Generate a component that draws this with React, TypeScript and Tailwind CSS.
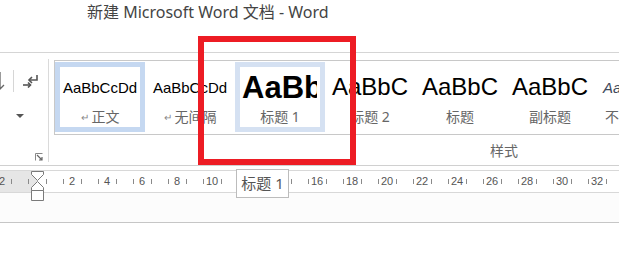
const CJK = '"Noto Sans", "Noto Sans CJK SC", sans-serif';

type Style = {
  sample: string;
  sampleClass: string;
  caption: string;
  mark?: boolean;
  frame?: string;
  left?: boolean;
};

const styles: Style[] = [
  { sample: 'AaBbCcDd', sampleClass: 'text-[15px] text-black', caption: '正文', mark: true, frame: 'border-[#c5d8f1]' },
  { sample: 'AaBbCcDd', sampleClass: 'text-[15px] text-black', caption: '无间隔', mark: true },
  { sample: 'AaBb', sampleClass: 'text-[31px] font-bold text-black', caption: '标题 1', frame: 'border-[#d5e1f2]', left: true },
  { sample: 'AaBbC', sampleClass: 'text-[24px] text-black', caption: '标题 2' },
  { sample: 'AaBbC', sampleClass: 'text-[24px] text-black', caption: '标题' },
  { sample: 'AaBbC', sampleClass: 'text-[24px] text-black', caption: '副标题' },
  { sample: 'AaBbCcDd', sampleClass: 'text-[15px] italic text-[#3f4a5c]', caption: '不明显强调' },
];

// ruler: origin at x=37, one character = 17.5px, labels every 2 (12 and 14 sit under the tooltip)
const ORIGIN = 37;
const UNIT = 17.5;
const labels = [-2, 2, 4, 6, 8, 10, 16, 18, 20, 22, 24, 26, 28, 30, 32];
const ticks = Array.from({ length: 36 }, (_, i) => i - 3).filter((k) => k < 11 || k > 13);

function StyleItem({ s }: { s: Style }) {
  return (
    <div className={`flex h-[70px] w-[90px] shrink-0 flex-col border-[5px] bg-white ${s.frame ?? 'border-transparent'}`}>
      <div className={`flex h-[40px] items-center overflow-hidden ${s.left ? 'justify-start pl-[2px] w-[77px]' : 'justify-center'}`}>
        <span className={`whitespace-nowrap leading-none ${s.sampleClass}`} style={{ fontFamily: '"Liberation Sans", sans-serif' }}>
          {s.sample}
        </span>
      </div>
      <div className="flex h-[20px] items-center justify-center gap-[3px] whitespace-nowrap text-[14px] leading-none text-[#666]" style={{ fontFamily: CJK }}>
        {s.mark && <span className="text-[10px] text-[#888]">↵</span>}
        {s.caption}
      </div>
    </div>
  );
}

export default function App() {
  return (
    <div className="relative h-[255px] w-[619px] overflow-hidden bg-white">
      {/* title bar */}
      <div className="h-[53px] border-b border-[#d5d5d5] pl-[87px]">
        <span className="text-[16px] leading-[20px] text-[#444]" style={{ fontFamily: CJK }}>
          新建 Microsoft Word 文档 - Word
        </span>
      </div>

      {/* ribbon */}
      <div className="flex h-[113px] border-b border-[#d0d0d0]">
        <div className="w-[49px] shrink-0 pb-[3px] pt-[6px]">
          <div className="flex h-full flex-col border-r border-[#dadada]">
            <div className="mt-[11px] flex h-[22px] items-center">
              <div className="w-[5px] overflow-hidden">
                <svg width="10" height="20" viewBox="0 0 10 20" className="-ml-[5px]">
                  <path d="M5 1v17M1 14l4 4 4-4" fill="none" stroke="#666" strokeWidth="1.3" />
                </svg>
              </div>
              <div className="ml-[8px] h-[22px] w-px bg-[#d6d6d6]" />
              <svg width="17" height="14" viewBox="0 0 17 14" className="ml-[8px]">
                <path d="M15 1v5H8" fill="none" stroke="#555" strokeWidth="1.6" />
                <path d="M10 3 7 6l3 3" fill="none" stroke="#555" strokeWidth="1.6" />
                <path d="M1 11h7" fill="none" stroke="#555" strokeWidth="1.6" />
                <path d="M6 8.5 8.5 11 6 13.5" fill="none" stroke="#555" strokeWidth="1.6" />
              </svg>
            </div>
            <svg width="10" height="5" viewBox="0 0 10 5" className="ml-[15px] mt-[22px]">
              <path d="M1 0h8L5 4z" fill="#555" />
            </svg>
            <svg width="8" height="8" viewBox="0 0 8 8" className="mb-[1px] ml-[35px] mt-auto">
              <path d="M0.5 7.5V0.5h7" fill="none" stroke="#888" strokeWidth="1" />
              <path d="M2 2l5 5M7 4v3H4" fill="none" stroke="#666" strokeWidth="1.2" />
            </svg>
          </div>
        </div>

        <div className="flex min-w-0 flex-1 flex-col">
          <div className="ml-[5px] mt-[7px] flex h-[75px] overflow-hidden border-b border-l border-t border-[#c8c8c8] pb-[2px] pt-px">
            {styles.map((s) => (
              <StyleItem key={s.caption} s={s} />
            ))}
          </div>
          <div className="flex flex-1 items-center pl-[441px] text-[14px] text-[#666]" style={{ fontFamily: CJK }}>
            样式
          </div>
        </div>
      </div>

      {/* ruler */}
      <div className="mt-[4px] h-[23px] border-b border-t border-[#d8d8d8]">
        <div className="relative h-full">
          <div className="absolute inset-y-0 left-0 w-[37px] bg-[#e6e6e6]" />
          {ticks.map((k) => (
            <div
              key={k}
              className="absolute top-[8px] h-[5px] w-px bg-[#8a8a8a]"
              style={{ left: Math.round(ORIGIN + UNIT / 2 + k * UNIT) }}
            />
          ))}
          {labels.map((n) => (
            <span
              key={n}
              className="absolute top-[4px] w-[20px] -translate-x-1/2 text-center text-[11px] leading-[13px] text-[#555]"
              style={{ left: ORIGIN + n * UNIT, fontFamily: '"Liberation Sans", sans-serif' }}
            >
              {Math.abs(n)}
            </span>
          ))}
        </div>
      </div>

      {/* document area */}
      <div className="h-[30px] border-b border-[#c6c6c6] bg-[#fcfcfc]" />

      {/* indent markers */}
      <svg width="13" height="31" viewBox="0 0 13 31" className="absolute left-[31px] top-[171px]">
        <path d="M0.5 0.5h12v3L6.5 9.5 0.5 3.5z" fill="#fff" stroke="#7a7a7a" />
        <path d="M6.5 10.5l6 6v3h-12v-3z" fill="#fff" stroke="#7a7a7a" />
        <path d="M0.5 19.5h12v10h-12z" fill="#fff" stroke="#7a7a7a" />
      </svg>

      {/* tooltip */}
      <div
        className="absolute left-[236px] top-[169px] flex h-[29px] w-[53px] items-center justify-center border border-[#bcbcbc] bg-white text-[15px] text-[#555]"
        style={{ fontFamily: CJK }}
      >
        标题 1
      </div>

      {/* red highlight */}
      <div className="absolute left-[198px] top-[36px] h-[129px] w-[158px] border-[6px] border-[#ed1c24]" />
    </div>
  );
}
